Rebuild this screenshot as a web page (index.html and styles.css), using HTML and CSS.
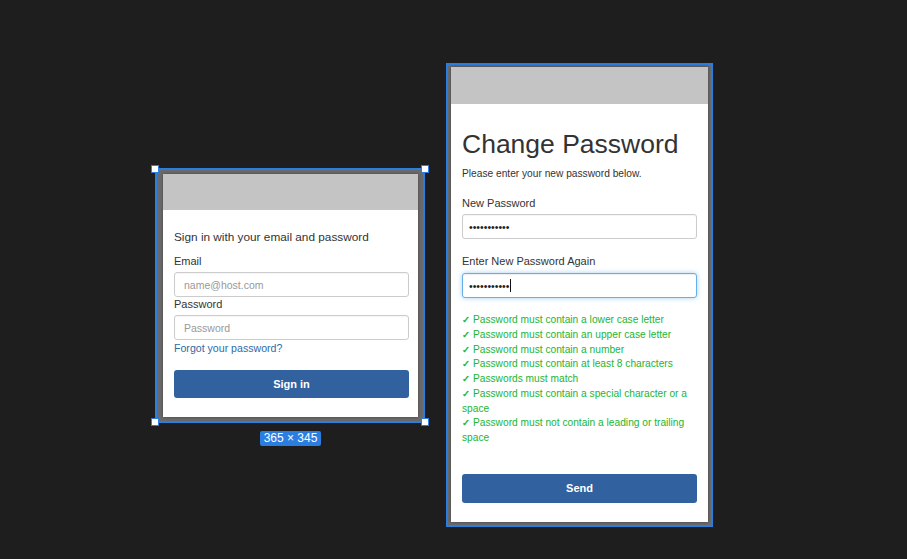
FILE: index.html
```html
<!DOCTYPE html>
<html lang="en">
<head>
<meta charset="utf-8">
<title>Auth screens</title>
<link rel="stylesheet" href="styles.css">
</head>
<body>
<div class="canvas">
  <div class="sel sel-signin">
    <div class="card">
      <div class="card-head"></div>
      <div class="card-body signin-body">
        <h2 class="signin-title">Sign in with your email and password</h2>
        <label class="lbl lbl-email">Email</label>
        <input class="field" type="text" placeholder="name@host.com">
        <label class="lbl">Password</label>
        <input class="field" type="password" placeholder="Password">
        <a class="forgot" href="#">Forgot your password?</a>
        <button class="btn btn-signin">Sign in</button>
      </div>
    </div>
    <span class="handle h-tl"></span>
    <span class="handle h-tr"></span>
    <span class="handle h-bl"></span>
    <span class="handle h-br"></span>
    <span class="size-tag">365 × 345</span>
  </div>

  <div class="sel sel-change">
    <div class="card">
      <div class="card-head"></div>
      <div class="card-body change-body">
        <h1 class="change-title">Change Password</h1>
        <p class="intro">Please enter your new password below.</p>
        <label class="lbl lbl-gap">New Password</label>
        <input class="field pw" type="password" value="abcdefghijk">
        <label class="lbl lbl-gap">Enter New Password Again</label>
        <div class="field-wrap">
          <input class="field pw focused" type="password" value="abcdefghijk">
          <span class="caret"></span>
        </div>
        <ul class="checks">
          <li>Password must contain a lower case letter</li>
          <li>Password must contain an upper case letter</li>
          <li>Password must contain a number</li>
          <li>Password must contain at least 8 characters</li>
          <li>Passwords must match</li>
          <li>Password must contain a special character or a space</li>
          <li>Password must not contain a leading or trailing space</li>
        </ul>
        <button class="btn btn-send">Send</button>
      </div>
    </div>
  </div>
</div>
</body>
</html>
```

FILE: styles.css
```css
* { box-sizing: border-box; }
html, body {
  margin: 0;
  padding: 0;
  width: 907px;
  height: 559px;
  overflow: hidden;
  background: #1e1e1e;
  font-family: "Liberation Sans", Arial, sans-serif;
  color: #333;
}
.canvas {
  position: relative;
  width: 907px;
  height: 559px;
}
.sel {
  position: absolute;
  border: 2px solid #2b7de0;
  background: #6a6a6a;
}
.sel-signin {
  left: 155px;
  top: 168px;
  width: 270px;
  height: 255px;
  padding: 4px 5px 4px 6px;
}
.sel-change {
  left: 446px;
  top: 63px;
  width: 267px;
  height: 464px;
  padding: 2px 3px 3px 3px;
}
.card {
  background: #fff;
  height: 100%;
  display: flex;
  flex-direction: column;
  box-shadow: 0 0 3px rgba(0,0,0,0.35);
}
.card-head {
  background: #c4c4c4;
  flex: none;
}
.sel-signin .card-head { height: 36px; }
.sel-change .card-head { height: 37px; }
.card-body {
  display: flex;
  flex-direction: column;
  padding-left: 11px;
}
.signin-body { padding: 19px 9px 0 11px; }
.change-body { padding: 25px 11px 0 11px; }

.signin-title {
  margin: 0;
  font-size: 11.8px;
  line-height: 16px;
  font-weight: normal;
  color: #333;
}
.lbl {
  display: block;
  font-size: 11px;
  line-height: 14px;
  color: #333;
}
.lbl-email { margin-top: 9px; }
.field {
  display: block;
  width: 100%;
  height: 25px;
  margin: 4px 0 0 0;
  padding: 0 9px;
  border: 1px solid #ccc;
  border-radius: 3px;
  font-family: "Liberation Sans", Arial, sans-serif;
  font-size: 10.5px;
  color: #333;
  background: #fff;
  outline: none;
  box-shadow: inset 0 1px 1px rgba(0,0,0,0.04);
}
.field::placeholder { color: #999; }
.forgot {
  display: block;
  margin-top: 1px;
  font-size: 10.6px;
  line-height: 14px;
  color: #2f6aa6;
  text-decoration: none;
}
.btn {
  display: block;
  width: 100%;
  border: none;
  border-radius: 3px;
  background: #31629f;
  color: #fff;
  font-family: "Liberation Sans", Arial, sans-serif;
  font-weight: bold;
  font-size: 11px;
}
.btn-signin { margin-top: 15px; height: 28px; }

.change-title {
  margin: 0;
  font-size: 26.5px;
  line-height: 31px;
  font-weight: normal;
  color: #333;
}
.intro {
  margin: 7px 0 0 0;
  font-size: 10.2px;
  line-height: 14px;
  color: #333;
}
.lbl-gap { margin-top: 15px; }
.pw { padding: 0 6px; font-size: 10.5px; color: #222; }
.field-wrap { position: relative; }
.focused {
  margin-top: 5px;
  border-color: #66afe9;
  box-shadow: inset 0 1px 1px rgba(0,0,0,0.075), 0 0 5px rgba(102,175,233,0.6);
}
.caret {
  position: absolute;
  left: 48px;
  top: 11px;
  width: 1px;
  height: 13px;
  background: #111;
}
.checks {
  list-style: none;
  margin: 15px 0 0 0;
  padding: 0;
  font-size: 10.2px;
  line-height: 14.75px;
  color: #1bb534;
}
.checks li::before {
  content: "✓";
  font-family: "DejaVu Sans", sans-serif;
  font-size: 9.5px;
  -webkit-text-stroke: 0.4px #1bb534;
  margin-right: 3px;
}
.btn-send { margin-top: 28px; height: 29px; }

.handle {
  position: absolute;
  width: 8px;
  height: 8px;
  background: #fff;
  border: 1px solid #2b7de0;
}
.h-tl { left: -6px; top: -5px; }
.h-tr { right: -6px; top: -5px; }
.h-bl { left: -6px; bottom: -5px; }
.h-br { right: -6px; bottom: -5px; }
.size-tag {
  position: absolute;
  left: 103px;
  top: 261px;
  width: 61px;
  height: 15px;
  border-radius: 2px;
  background: #2b7de0;
  color: #fff;
  font-family: "Liberation Sans", Arial, sans-serif;
  font-size: 12px;
  line-height: 15px;
  text-align: center;
}
```
